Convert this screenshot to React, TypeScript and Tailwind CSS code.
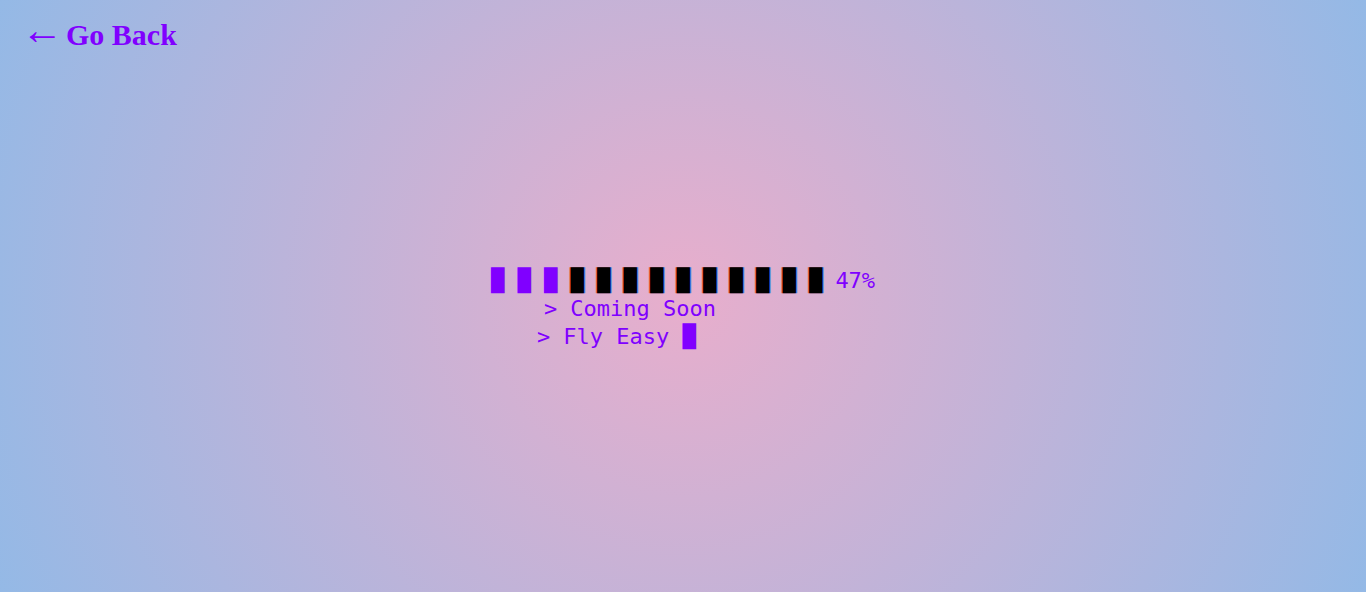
const filled = 3
const total = 13

export default function App() {
  const blocks = Array.from({ length: total }, (_, i) => i)
  return (
    <div className="relative h-[592px] w-full overflow-hidden bg-[radial-gradient(circle,#e8aecc_0%,#94b9e6_100%)]">
      <a className="absolute left-[21px] top-[12px] flex items-center font-['Liberation_Serif',serif] text-[30px] font-bold text-[#8000ff] no-underline">
        <span className="text-[42px] font-normal leading-[30px] mr-[3px] mt-[-10px]">←</span>
        <span>Go Back</span>
      </a>
      <div className="flex h-full items-center justify-center">
        <div className="mt-[26px] font-['DejaVu_Sans_Mono',monospace] text-[22px] leading-[28px] text-[#8000ff] whitespace-pre">
          <div>
            {blocks.map((i) =>
              i < filled ? (
                <span key={i}>█ </span>
              ) : (
                <span key={i}>
                  <span className="text-black [text-shadow:-1px_0_rgba(255,60,0,0.6),1px_0_rgba(0,120,255,0.6)]">█</span>{" "}
                </span>
              )
            )}
            <span>47%</span>
          </div>
          <div className="ml-[53px]">&gt; Coming Soon</div>
          <div className="ml-[46px]">&gt; Fly Easy █</div>
        </div>
      </div>
    </div>
  )
}
